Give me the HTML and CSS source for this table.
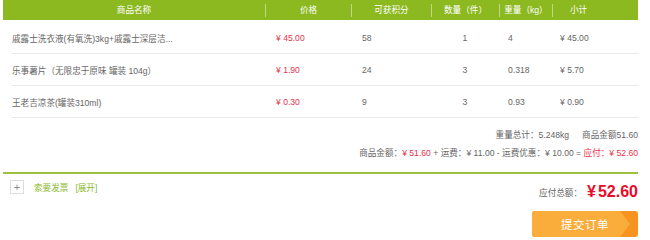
FILE: index.html
```html
<!DOCTYPE html>
<html lang="zh-CN">
<head>
<meta charset="utf-8">
<title>订单确认</title>
<link rel="stylesheet" href="styles.css">
</head>
<body>
<div class="order">
  <div class="thead">
    <div class="th">商品名称</div>
    <div class="th sep">价格</div>
    <div class="th sep">可获积分</div>
    <div class="th sep">数量（件）</div>
    <div class="th sep">重量（kg）</div>
    <div class="th sep">小计</div>
    <div class="th"></div>
  </div>
  <div class="tbody">
    <div class="tr">
      <div class="td name">戚露士洗衣液(有氧洗)3kg+戚露士深层洁...</div>
      <div class="td red">¥ 45.00</div>
      <div class="td">58</div>
      <div class="td qty">1</div>
      <div class="td">4</div>
      <div class="td">¥ 45.00</div>
    </div>
    <div class="tr">
      <div class="td name">乐事薯片（无限忠于原味 罐装 104g）</div>
      <div class="td red">¥ 1.90</div>
      <div class="td">24</div>
      <div class="td qty">3</div>
      <div class="td">0.318</div>
      <div class="td">¥ 5.70</div>
    </div>
    <div class="tr">
      <div class="td name">王老吉凉茶(罐装310ml)</div>
      <div class="td red">¥ 0.30</div>
      <div class="td">9</div>
      <div class="td qty">3</div>
      <div class="td">0.93</div>
      <div class="td">¥ 0.90</div>
    </div>
  </div>
  <div class="summary">
    <div class="sum-line"><span>重量总计：5.248kg</span><span class="gap">商品金额51.60</span></div>
    <div class="sum-line">商品金额：<span class="red">¥ 51.60</span> + 运费：¥ 11.00 - 运费优惠：¥ 10.00 = <span class="red">应付：¥ 52.60</span></div>
  </div>
  <div class="footer">
    <div class="invoice">
      <span class="plus">+</span>
      <span class="inv-text">索要发票</span>
      <span class="inv-open">[展开]</span>
    </div>
    <div class="pay">
      <div class="total">应付总额：<span class="total-num"><span class="yen">¥</span>52.60</span></div>
      <button class="submit" type="button"><span class="submit-label">提交订单</span></button>
    </div>
  </div>
</div>
</body>
</html>
```

FILE: styles.css
```css
html, body {
  margin: 0;
  padding: 0;
  background: #fff;
}
body {
  font-family: "Liberation Sans", "Noto Sans CJK SC", sans-serif;
  font-size: 8.6px;
  color: #666;
}
.order {
  width: 635px;
  margin-left: 3px;
}
.thead, .tr {
  display: grid;
  grid-template-columns: 262px 86px 80px 68px 53px 52px 34px;
  align-items: center;
}
.thead {
  height: 20px;
  background: #8cb920;
  color: #fff;
  margin-bottom: 2px;
}
.th {
  text-align: center;
  height: 13px;
  line-height: 13px;
}
.th.sep {
  border-left: 1px solid rgba(255, 255, 255, 0.45);
}
.tbody {
  margin-left: 9px;
}
.tr {
  grid-template-columns: 253px 86px 80px 68px 53px 86px;
  height: 31px;
  border-bottom: 1px solid #e8e8e8;
}
.td {
  padding-left: 11px;
  white-space: nowrap;
}
.td.name {
  padding-left: 0;
}
.td.qty {
  padding-left: 0;
  text-align: center;
}
.tr .td:nth-child(5) { padding-left: 9px; }
.tr .td:nth-child(6) { padding-left: 8px; }
.red {
  color: #e8324b;
}
.summary {
  padding-top: 9px;
  text-align: right;
  height: 45px;
  border-bottom: 2px solid #9cc13e;
}
.sum-line {
  height: 18px;
  line-height: 16px;
}
.gap {
  margin-left: 13px;
}
.footer {
  display: flex;
  justify-content: space-between;
}
.invoice {
  display: flex;
  align-items: center;
  margin-top: 6px;
  margin-left: 7px;
  height: 14px;
  color: #8ab82a;
}
.plus {
  width: 12px;
  height: 12px;
  border: 1px solid #ddd;
  color: #888;
  font-size: 11px;
  line-height: 12px;
  text-align: center;
}
.inv-text {
  margin-left: 10px;
}
.inv-open {
  margin-left: 7px;
}
.pay {
  display: flex;
  flex-direction: column;
  align-items: flex-end;
  padding-top: 9px;
}
.total {
  height: 18px;
  display: flex;
  align-items: center;
  color: #666;
}
.total-num {
  margin-left: 5px;
  color: #e60c2a;
  font-size: 16px;
  font-weight: bold;
}
.yen {
  margin-right: 2px;
}
.submit {
  position: relative;
  margin-top: 10px;
  width: 106px;
  height: 26px;
  border: 0;
  border-radius: 3px;
  padding: 0;
  background: #f7941f;
  color: #fff;
  font-family: "Noto Sans CJK SC", "Liberation Sans", sans-serif;
  font-size: 11.5px;
  overflow: hidden;
}
.submit::before {
  content: "";
  position: absolute;
  inset: 0;
  background: #fbad3b;
  clip-path: polygon(0 0, calc(100% - 18px) 0, calc(100% - 8px) 50%, calc(100% - 18px) 100%, 0 100%);
}
.submit-label {
  position: relative;
  display: block;
  letter-spacing: 0.5px;
}
```
